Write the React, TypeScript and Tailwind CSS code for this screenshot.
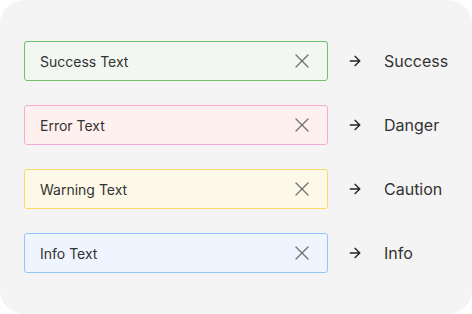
import React from 'react';
import { X, ArrowRight } from 'lucide-react';

const rows = [
  { text: 'Success Text', label: 'Success', box: 'border-[#6fc26b] bg-[#f2f7f1]' },
  { text: 'Error Text', label: 'Danger', box: 'border-[#f7a8d3] bg-[#fff0f0]' },
  { text: 'Warning Text', label: 'Caution', box: 'border-[#fbd86a] bg-[#fdf9e8]' },
  { text: 'Info Text', label: 'Info', box: 'border-[#93c5fd] bg-[#eef5ff]' },
];

export default function App() {
  return (
    <div className="w-[472px] h-[314px] bg-white" style={{ fontFamily: 'Inter, "Liberation Sans", sans-serif' }}>
      <div className="w-full h-full bg-[#f4f4f4] rounded-[24px] flex flex-col justify-center gap-6 pl-6">
        {rows.map((r) => (
          <div key={r.label} className="flex items-center">
            <div className={`w-[304px] h-10 border rounded-[3px] flex items-center justify-between pl-[15px] pr-[13px] ${r.box}`}>
              <span className="text-[14px] text-[#333]">{r.text}</span>
              <X className="w-6 h-6 text-[#707070]" strokeWidth={1.3} />
            </div>
            <ArrowRight className="ml-[19px] w-4 h-4 text-[#222]" strokeWidth={2} />
            <span className="ml-[21px] text-[16px] text-[#333]">{r.label}</span>
          </div>
        ))}
      </div>
    </div>
  );
}
